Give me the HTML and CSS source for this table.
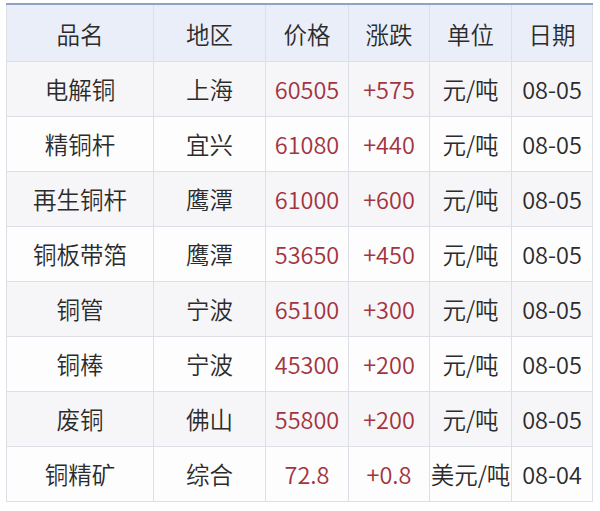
FILE: index.html
```html
<!DOCTYPE html>
<html lang="zh-CN">
<head>
<meta charset="utf-8">
<title>铜价</title>
<link rel="stylesheet" href="styles.css">
</head>
<body>
<div class="wrap">
<table class="prices">
<colgroup>
<col class="c1"><col class="c2"><col class="c3"><col class="c4"><col class="c5"><col class="c6">
</colgroup>
<thead>
<tr><th>品名</th><th>地区</th><th>价格</th><th>涨跌</th><th>单位</th><th>日期</th></tr>
</thead>
<tbody>
<tr><td>电解铜</td><td>上海</td><td class="red">60505</td><td class="red">+575</td><td>元/吨</td><td>08-05</td></tr>
<tr><td>精铜杆</td><td>宜兴</td><td class="red">61080</td><td class="red">+440</td><td>元/吨</td><td>08-05</td></tr>
<tr><td>再生铜杆</td><td>鹰潭</td><td class="red">61000</td><td class="red">+600</td><td>元/吨</td><td>08-05</td></tr>
<tr><td>铜板带箔</td><td>鹰潭</td><td class="red">53650</td><td class="red">+450</td><td>元/吨</td><td>08-05</td></tr>
<tr><td>铜管</td><td>宁波</td><td class="red">65100</td><td class="red">+300</td><td>元/吨</td><td>08-05</td></tr>
<tr><td>铜棒</td><td>宁波</td><td class="red">45300</td><td class="red">+200</td><td>元/吨</td><td>08-05</td></tr>
<tr><td>废铜</td><td>佛山</td><td class="red">55800</td><td class="red">+200</td><td>元/吨</td><td>08-05</td></tr>
<tr><td>铜精矿</td><td>综合</td><td class="red">72.8</td><td class="red">+0.8</td><td>美元/吨</td><td>08-04</td></tr>
</tbody>
</table>
</div>
</body>
</html>
```

FILE: styles.css
```css
html, body {
  margin: 0;
  padding: 0;
  background: #ffffff;
}
.wrap {
  padding: 3px 0 0 6px;
}
.prices {
  width: 586px;
  table-layout: fixed;
  border-collapse: collapse;
  border-top: 2px solid #8fa2c3;
  font-family: "Noto Sans CJK SC", "Noto Sans", sans-serif;
  font-size: 23.5px;
  font-weight: 350;
  color: #2b2b2b;
}
.c1 { width: 147px; }
.c2 { width: 112px; }
.c3 { width: 83px; }
.c4 { width: 81px; }
.c5 { width: 82px; }
.c6 { width: 81px; }
.prices th, .prices td {
  border: 1px solid #dcdfe6;
  padding: 0;
  text-align: center;
  white-space: nowrap;
  font-weight: 350;
  line-height: 30px;
}
.prices th {
  height: 54px;
  padding-top: 2px;
  background: #e9eef8;
  border-top: none;
}
.prices td {
  height: 54px;
}
.prices tbody tr:nth-child(odd) td {
  background: #f6f6f8;
}
.prices tbody tr:nth-child(even) td {
  background: #fdfdfe;
}
.prices td.red {
  color: #a3343f;
}
```
